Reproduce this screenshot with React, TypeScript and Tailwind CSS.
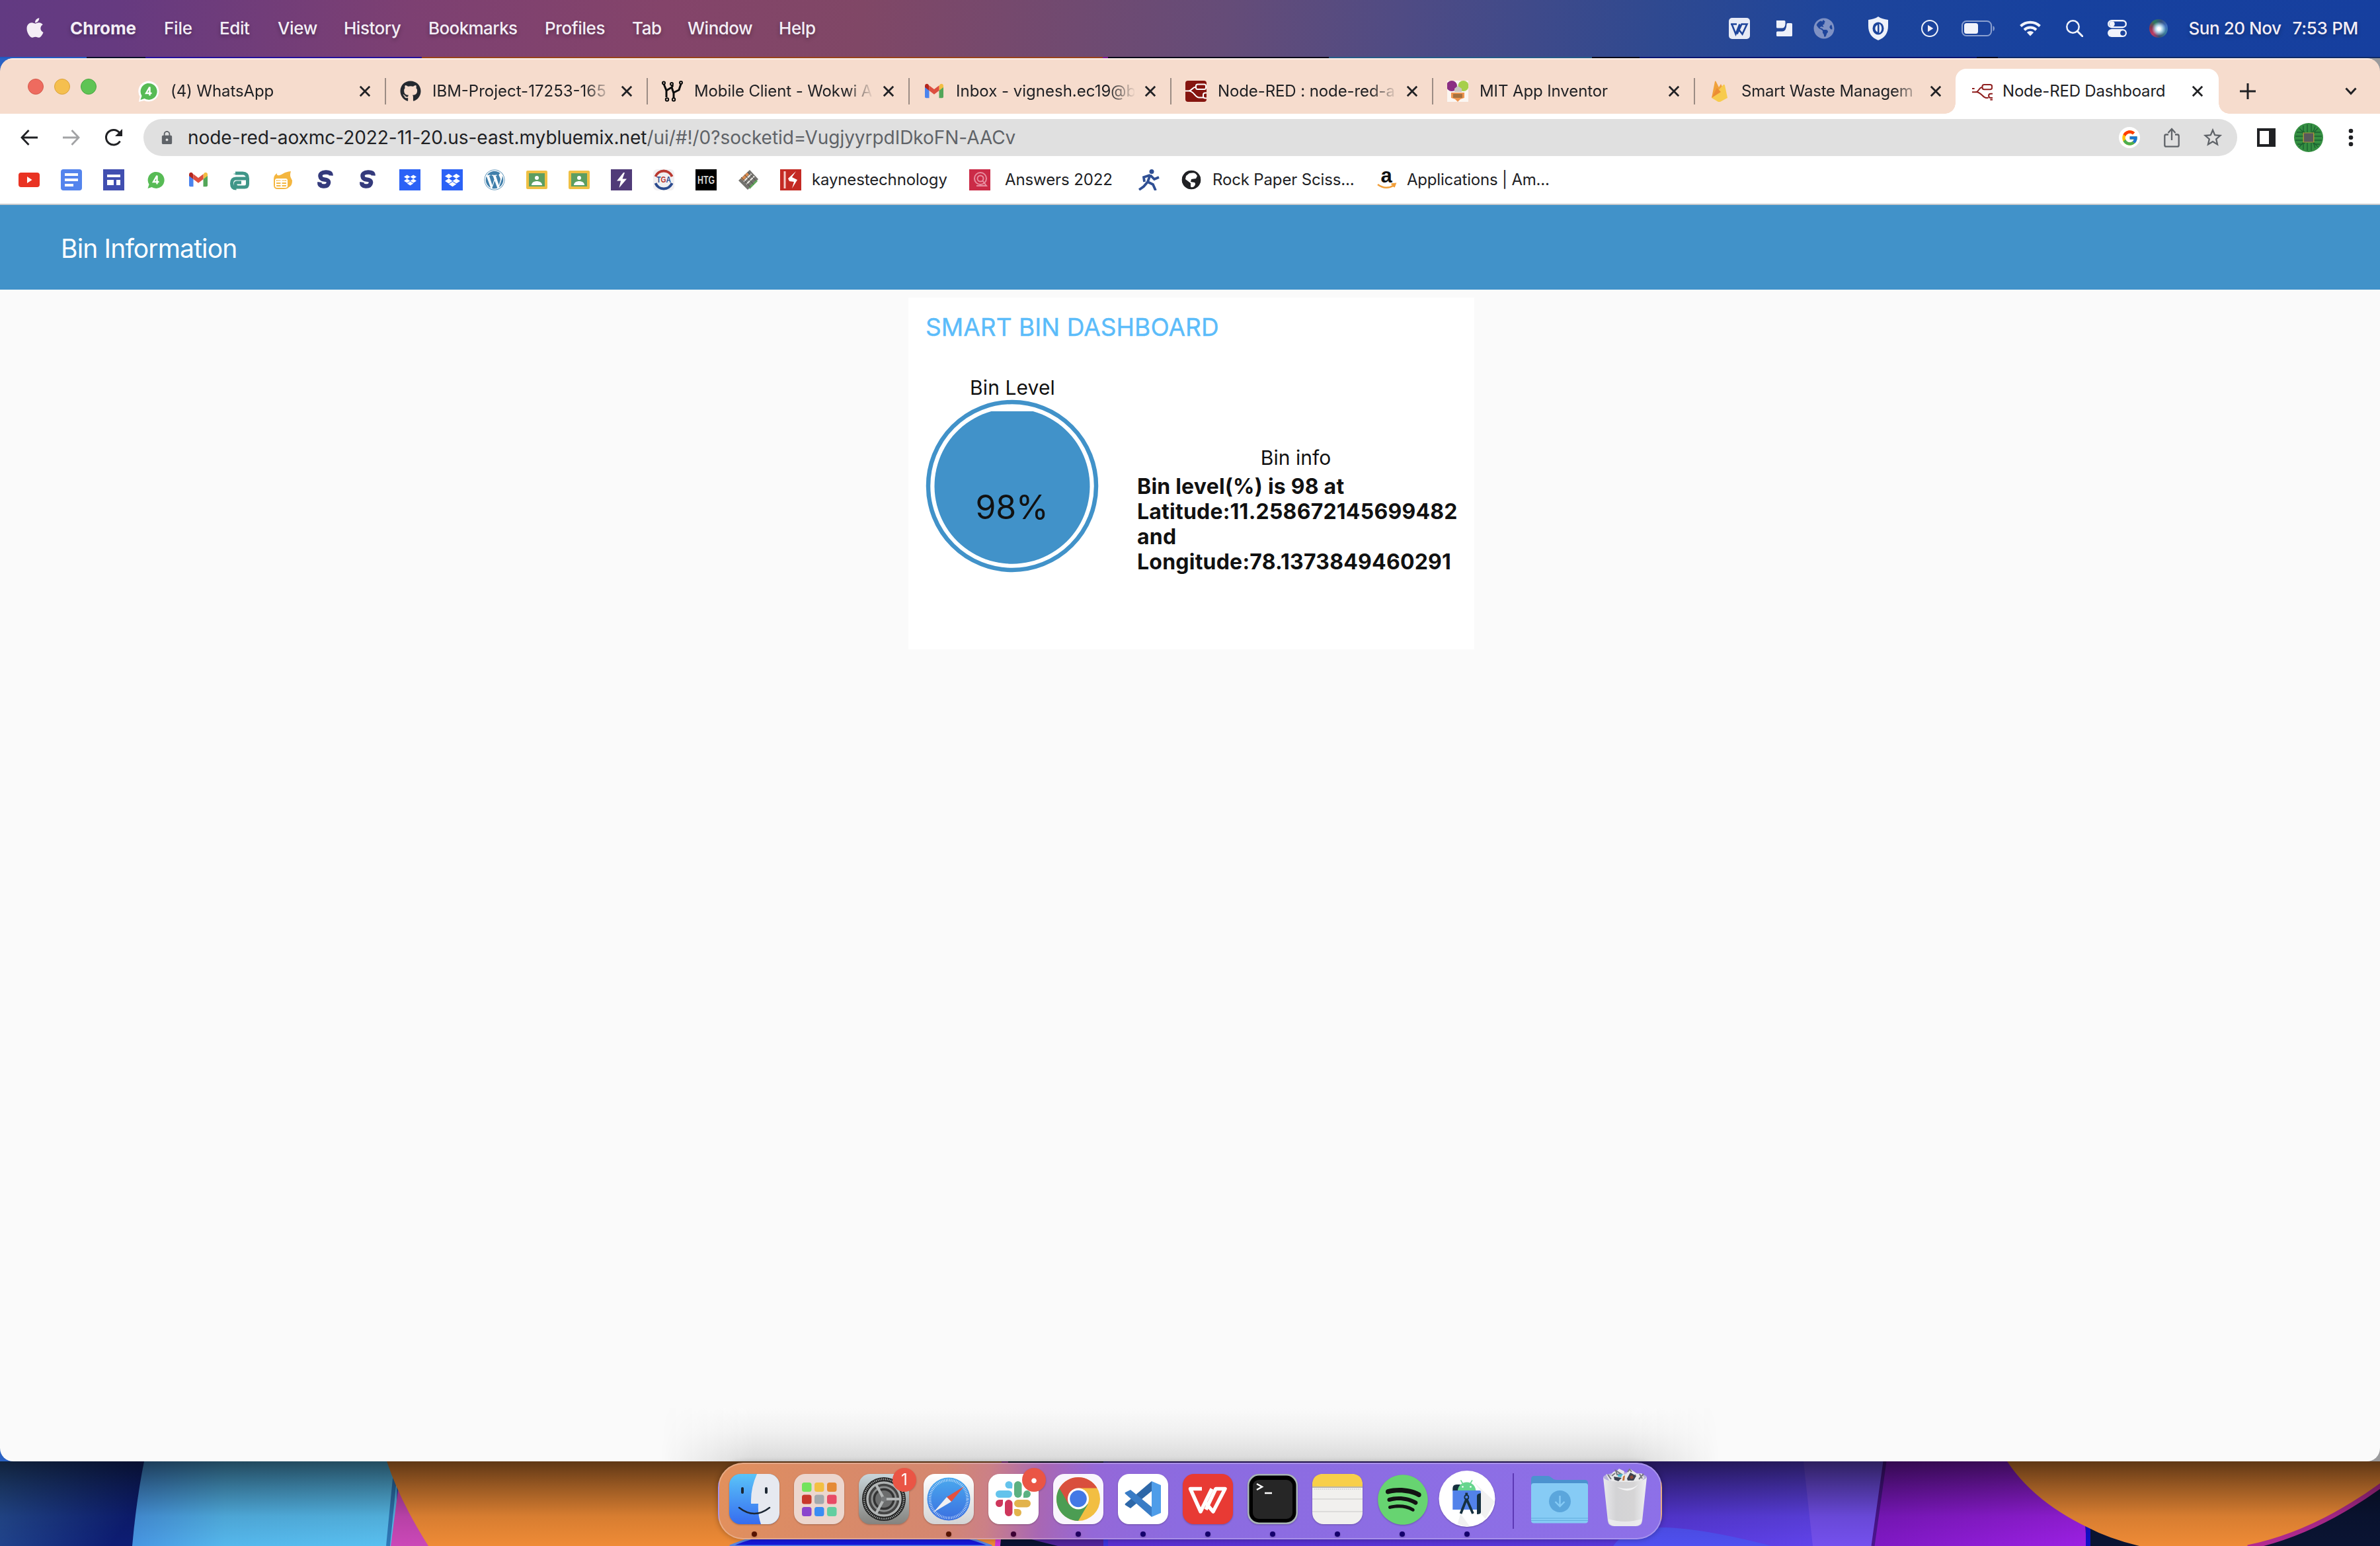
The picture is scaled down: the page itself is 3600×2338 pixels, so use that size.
import React from "react";
import { FaApple, FaGithub, FaWordpress, FaDropbox, FaSpotify, FaGlobeAmericas } from "react-icons/fa";
import { FcGoogle } from "react-icons/fc";
import { MdLock, MdStarBorder, MdPlayArrow } from "react-icons/md";

/* ---------- small drawings ---------- */

const NodeRed = ({ c = "#8f1f1f" }: { c?: string }) => (
  <g fill="none" stroke={c} strokeWidth="2.200">
    <rect x="17" y="5" width="16" height="8" rx="3" />
    <path d="M0 11.500h4M0 17.500h6c5 0 5-8 11-8M6 17c9 0 11 9 17 10h4" />
    <path d="M34 20h-3q-3.500 0-3.500 3.500t3.500 3.500h3M30 30h4" />
  </g>
);

const Whatsapp = ({ className, halo }: { className: string; halo?: boolean }) => (
  <svg viewBox="0 0 32 32" className={className}>
    {halo && <path d="M1 32l1.500-8A15.500 15.500 0 1 1 9 30z" fill="#fff" />}
    <path d="M3.500 29l2-6A12.500 12.500 0 1 1 9.500 27z" fill="#57bb55" />
    <path d="M17.500 9.500v13M17.500 9.500l-5.500 9.500h8.500" stroke="#fff" strokeWidth="2.400" fill="none" />
  </svg>
);

const Gmail = ({ className }: { className: string }) => (
  <svg viewBox="0 0 32 32" className={className}>
    <path d="M2 9v15.500a1.800 1.800 0 0 0 1.800 1.800H8.500V14z" fill="#4b84ee" />
    <path d="M30 9v15.500a1.800 1.800 0 0 1-1.800 1.800H23.500V14z" fill="#53a659" />
    <path d="M23.500 8v7L30 10V8c0-3-3-4-5-2.500z" fill="#f2bd42" />
    <path d="M8.500 8v7L2 10V8c0-3 3-4 5-2.500z" fill="#b3261e" />
    <path d="M8.500 15V7.200L16 13l7.500-5.800V15L16 20.700z" fill="#dd4f40" />
  </svg>
);

const Close = ({ className = "" }: { className?: string }) => (
  <svg viewBox="0 0 18 18" className={"size-[18px] shrink-0 " + className}>
    <path d="M1.800 1.800l14.400 14.400M16.200 1.800L1.800 16.200" stroke="#202124" strokeWidth="2.800" />
  </svg>
);

/* ---------- menu bar ---------- */

function MenuBar() {
  return (
    <header className="flex h-[86px] shrink-0 items-center bg-[linear-gradient(95deg,#623a82_0px,#663a80_180px,#7d4072_620px,#84446a_1000px,#804766_1300px,#654c78_1850px,#4f4b84_2120px,#2f4990_2500px,#1e459b_2760px,#17419e_3100px,#163f9f_3600px)] text-[26px] leading-none font-medium text-[#f4eef6] [text-shadow:0_3px_6px_rgba(0,0,0,.3)]">
      <div className="flex w-[106px] pl-[36px]">
        <FaApple className="-mt-[3px] size-[34px]" />
      </div>
      <span className="w-[142px] font-bold tracking-[-0.1px]">Chrome</span>
      <span className="w-[84px] tracking-[-0.2px]">File</span>
      <span className="w-[88px] tracking-[-0.4px]">Edit</span>
      <span className="w-[100px] tracking-[-0.4px]">View</span>
      <span className="w-[128px] tracking-[-0.5px]">History</span>
      <span className="w-[176px] tracking-[-0.6px]">Bookmarks</span>
      <span className="w-[132px] tracking-[-0.4px]">Profiles</span>
      <span className="w-[84px] tracking-[-0.4px]">Tab</span>
      <span className="w-[138px] tracking-[-0.5px]">Window</span>
      <span className="tracking-[-0.4px]">Help</span>

      <div className="ml-auto flex items-center">
        <svg viewBox="0 0 32 32" className="size-[32px]">
          <rect width="32" height="32" rx="5" fill="#e8ebf6" />
          <path d="M3 9.500h9M4.500 9.500l6 15 6-15M14.500 17l6 7.500 7-15h-8l-7 15" fill="none" stroke="#1f459b" strokeWidth="2.600" />
        </svg>
        <svg viewBox="0 0 24 24" className="ml-[40px] size-[24px]">
          <path d="M0 0h12q1.500 0 1.500 1.500v4q-.5 6-5 6H1.500Q0 11.500 0 10zM17 4h5.500q1.500 0 1.500 1.500v17q0 1.500-1.500 1.500h-21Q0 24 0 22.500V18q0-1.500 1.500-1.500H9q6 0 6.500-11Q15.500 4 17 4z" fill="#eef1fa" />
        </svg>
        <FaGlobeAmericas className="ml-[32px] size-[32px] opacity-45" />
        <svg viewBox="0 0 30 36" className="ml-[51px] h-[36px] w-[30px]">
          <path d="M15 0c4 3 9 4 15 5v9c0 11-5 18-15 22C5 32 0 25 0 14V5c6-1 11-2 15-5z" fill="#eef1fa" />
          <ellipse cx="15" cy="18" rx="8.500" ry="9.500" fill="#1c449b" />
          <path d="M14 12.500a6 6 0 0 0 0 11zM16.500 11c5 2 5 12 0 14z" fill="#eef1fa" />
        </svg>
        <div className="ml-[50px] grid size-[26px] place-items-center rounded-full border-[2.5px] border-[#eef1fa]">
          <MdPlayArrow className="size-[18px]" />
        </div>
        <svg viewBox="0 0 50 24" className="ml-[35px] h-[24px] w-[50px]">
          <rect x="1" y="1" width="44" height="22" rx="6.500" fill="none" stroke="#8ba0cf" strokeWidth="2" />
          <rect x="4" y="4" width="21" height="16" rx="3.500" fill="#f1f3fb" />
          <path d="M47.500 8q2.500 1 2.500 4t-2.500 4z" fill="#8ba0cf" />
        </svg>
        <svg viewBox="0 0 32 24" className="ml-[38px] h-[24px] w-[32px]">
          <path d="M1.500 8.500a21 21 0 0 1 29 0M7 14.200a13 13 0 0 1 18 0" fill="none" stroke="#f1f3fb" strokeWidth="4" />
          <path d="M10.800 18a7.500 7.500 0 0 1 10.400 0L16 23.500z" fill="#f1f3fb" />
        </svg>
        <svg viewBox="0 0 26 26" className="ml-[38px] size-[26px]">
          <circle cx="10.500" cy="10.500" r="9.200" fill="none" stroke="#f1f3fb" strokeWidth="2.500" />
          <path d="M17.300 17.300l7.500 7.500" stroke="#f1f3fb" strokeWidth="3" strokeLinecap="round" />
        </svg>
        <svg viewBox="0 0 29 26" className="ml-[37px] h-[26px] w-[29px]">
          <rect x="1.200" y="1.200" width="26.600" height="10" rx="5" fill="none" stroke="#f1f3fb" strokeWidth="2.400" />
          <circle cx="6.700" cy="6.200" r="4" fill="#f1f3fb" />
          <rect y="14" width="29" height="12" rx="6" fill="#f1f3fb" />
          <circle cx="23" cy="20" r="3.800" fill="#1b439c" />
        </svg>
        <div className="ml-[34px] size-[28px] rounded-full bg-[radial-gradient(circle_at_52%_52%,#fff_0_10%,#b9dcee_24%,transparent_52%),conic-gradient(from_20deg,#35507c,#3f6fc0,#3a7f9d,#39506f,#c03a63,#8b3450,#2d7a5e,#35507c)]" />
        <span className="ml-[32px] w-[157px] tracking-[-0.45px] whitespace-pre">Sun 20 Nov</span>
        <span className="mr-[33px] tracking-[-0.3px]">7:53 PM</span>
      </div>
    </header>
  );
}

/* ---------- tab strip ---------- */

const fav = "size-[32px] shrink-0";

const tabs: { title: string; icon: React.ReactNode; track: string }[] = [
  { title: "(4) WhatsApp", icon: <Whatsapp className={fav} halo />, track: "tracking-[-0.1px]" },
  { title: "IBM-Project-17253-165", icon: <FaGithub className={fav + " text-[#24292f]"} />, track: "tracking-[0px]" },
  {
    title: "Mobile Client - Wokwi A",
    track: "tracking-[-0.1px]",
    icon: (
      <svg viewBox="0 0 32 32" className={fav}>
        <g fill="none" stroke="#0b0b0b" strokeWidth="3">
          <path d="M3 5l4 10v10M7 15l8-5 2-3M15 10l3 9v8M18 18l8-4 3-9" />
          <g strokeWidth="2" fill="#f6dccd">
            <circle cx="3" cy="3.500" r="2" /><circle cx="15" cy="5" r="2" /><circle cx="29" cy="3" r="2" />
            <circle cx="8" cy="28.500" r="2.200" /><circle cx="18" cy="28.500" r="2.200" />
          </g>
        </g>
      </svg>
    ),
  },
  { title: "Inbox - vignesh.ec19@b", icon: <Gmail className={fav} />, track: "tracking-[0px]" },
  {
    title: "Node-RED : node-red-a",
    track: "tracking-[-0.1px]",
    icon: (
      <svg viewBox="0 0 32 32" className={fav}>
        <rect width="32" height="32" rx="4" fill="#85150f" />
        <g fill="none" stroke="#fff" strokeWidth="2">
          <rect x="16" y="5.500" width="15" height="7.500" rx="2.500" />
          <path d="M0 15.500h5c5 0 5-6 11-6M5 15.500c8 0 9 9 15 10" />
          <path d="M33 18.500h-3q-3 0-3 3v2q0 3 3 3h3M20 25.500h7" />
        </g>
      </svg>
    ),
  },
  {
    title: "MIT App Inventor",
    track: "tracking-[-0.1px]",
    icon: (
      <svg viewBox="0 0 32 32" className={fav}>
        <rect width="32" height="32" fill="#fbf6f2" />
        <circle cx="7" cy="8" r="8" fill="#8a2f83" /><circle cx="24.500" cy="8" r="8" fill="#a6cf4b" />
        <path d="M11 12l5-4 6 4v5H11z" fill="#c9c6c4" />
        <path d="M6 18h20v8l-6 2-4 4-4-4-6-2z" fill="#ee9550" />
        <path d="M9 20h14v6H9z" fill="#a5713f" />
      </svg>
    ),
  },
  {
    title: "Smart Waste Managem",
    track: "tracking-[-0.2px]",
    icon: (
      <svg viewBox="0 0 32 32" className={fav}>
        <path d="M4 26L9 1q.500-1 1.500 0l4.500 9 3-5 2 4z" fill="#f0a13a" />
        <path d="M4 26L22 6q1-1 2 1l4 19-11 6q-1.500.600-3 0z" fill="#f7cb4d" />
        <path d="M4 26L12 11l6 6z" fill="#ec8d34" />
      </svg>
    ),
  },
];

function TabStrip() {
  return (
    <div className="flex h-[84px] shrink-0 items-end bg-[#f6dccd] text-[24px] leading-[30px] text-[#202124] shadow-[inset_0_2px_0_#fbeee6]">
      <div className="flex h-[68px] w-[188px] shrink-0 gap-[16px] pt-[15px] pl-[42px]">
        <i className="size-[24px] rounded-full border border-[#d45a4c] bg-[#ee6b5f]" />
        <i className="size-[24px] rounded-full border border-[#dba23b] bg-[#f5bf4f]" />
        <i className="size-[24px] rounded-full border border-[#4ba544] bg-[#5fc454]" />
      </div>
      {tabs.map((t, i) => (
        <div key={t.title} className="flex h-[68px] w-[396px] shrink-0 items-center pl-[21px]">
          {t.icon}
          <span className={"ml-[17px] w-[270px] shrink-0 whitespace-nowrap [mask-image:linear-gradient(to_right,#000_230px,transparent_272px)] " + t.track}>{t.title}</span>
          <Close className="ml-[15px]" />
          <i className={"ml-[21px] h-[40px] w-[2px] " + (i < 6 ? "bg-[#9b8c84]" : "")} />
        </div>
      ))}
      <div className="relative -ml-[2px] flex h-[68px] w-[398px] shrink-0 items-center rounded-t-[16px] bg-white pl-[25px] before:absolute before:bottom-0 before:-left-[16px] before:size-[16px] before:bg-[radial-gradient(circle_at_0_0,transparent_15.5px,#fff_16px)] after:absolute after:-right-[16px] after:bottom-0 after:size-[16px] after:bg-[radial-gradient(circle_at_100%_0,transparent_15.5px,#fff_16px)]">
        <svg viewBox="0 0 34 32" className="h-[30px] w-[31px] shrink-0"><NodeRed /></svg>
        <span className="ml-[15px] w-[271px] tracking-[-0.2px] whitespace-nowrap">Node-RED Dashboard</span>
        <Close className="ml-[15px]" />
      </div>
      <svg viewBox="0 0 26 26" className="mb-[21px] ml-[31px] size-[26px]">
        <path d="M13 1v24M1 13h24" stroke="#202124" strokeWidth="3" />
      </svg>
      <svg viewBox="0 0 18 12" className="mr-[35px] mb-[28px] ml-auto h-[12px] w-[18px]">
        <path d="M1.500 1.500L9 9.500l7.500-8" fill="none" stroke="#202124" strokeWidth="3" />
      </svg>
    </div>
  );
}

/* ---------- address bar ---------- */

function AddressRow() {
  return (
    <div className="flex h-[72px] shrink-0 items-center bg-white">
      <svg viewBox="0 0 26 24" className="ml-[31px] h-[24px] w-[26px]">
        <path d="M12.500 1L2 12l10.500 11M2 12h24" fill="none" stroke="#202124" strokeWidth="2.800" />
      </svg>
      <svg viewBox="0 0 26 24" className="ml-[38px] h-[24px] w-[26px]">
        <path d="M13.500 1L24 12 13.500 23M24 12H0" fill="none" stroke="#a2a3a5" strokeWidth="2.800" />
      </svg>
      <svg viewBox="0 0 28 28" className="ml-[37px] size-[28px]">
        <path d="M23.500 19.500A11.300 11.300 0 1 1 22.500 6.500" fill="none" stroke="#202124" strokeWidth="3" />
        <path d="M27 1v11H16z" fill="#202124" />
      </svg>
      <div className="ml-[31px] flex h-[56px] w-[3167px] items-center rounded-full bg-[#e0e0e0] pl-[24px]">
        <MdLock className="size-[23px] text-[#5f6368]" />
        <span className="ml-[20px] text-[28px] leading-none tracking-[-0.04px] whitespace-nowrap text-[#5f6368]">
          <span className="text-[#202124]">node-red-aoxmc-2022-11-20.us-east.mybluemix.net</span>/ui/#!/0?socketid=VugjyyrpdIDkoFN-AACv
        </span>
        <div className="ml-auto grid size-[32px] place-items-center rounded-full bg-white">
          <FcGoogle className="size-[27px]" />
        </div>
        <svg viewBox="0 0 24 30" className="ml-[36px] h-[30px] w-[24px]">
          <path d="M7 10.500H3.500q-2.200 0-2.200 2.200v13.800q0 2.200 2.200 2.200h17q2.200 0 2.200-2.200V12.700q0-2.200-2.200-2.200H17M12 19V2.500M6.500 8L12 2l5.500 6" fill="none" stroke="#5f6368" strokeWidth="2.300" />
        </svg>
        <MdStarBorder className="mr-[20px] ml-[33px] size-[34px] text-[#5f6368]" />
      </div>
      <i className="ml-[30px] h-[28px] w-[28px] border-[4px] border-r-[10px] border-[#202124]" />
      <svg viewBox="0 0 44 44" className="ml-[28px] size-[44px]">
        <circle cx="22" cy="22" r="22" fill="#358f42" />
        <g stroke="#1b6130" strokeWidth="1.300" fill="none">
          <path d="M14 4v8l3 4M20 2v12M26 2v12M32 5l-2 6-3 4M4 14h8l3 3M2 20h12M2 26h12M5 32h7l3-4M14 40v-8l3-3M20 42V30M26 42V30M32 38l-2-6-2-3M40 14h-8l-3 3M42 20H30M42 26H30M39 32h-7l-3-3" />
          <path d="M8 8l6 6M36 8l-6 6M8 36l6-6M36 36l-6-6" />
        </g>
        <rect x="13.500" y="14.500" width="17" height="15" fill="#a8963a" />
        <rect x="15" y="15.500" width="14" height="13" fill="#57595b" />
      </svg>
      <svg viewBox="0 0 8 28" className="ml-[38px] h-[28px] w-[8px]">
        <g fill="#202124"><circle cx="4" cy="4" r="3.300" /><circle cx="4" cy="14" r="3.300" /><circle cx="4" cy="24" r="3.300" /></g>
      </svg>
    </div>
  );
}

/* ---------- bookmarks ---------- */

const bk = "size-[32px] shrink-0";

const Dropbox = ({ size }: { size: string }) => (
  <div className={bk + " grid place-items-center bg-[#2b62f6] text-white"}><FaDropbox className={size} /></div>
);
const Classroom = () => (
  <svg viewBox="0 0 32 32" className={bk}>
    <rect y="2" width="32" height="28" rx="2" fill="#efc044" />
    <rect x="4" y="6" width="24" height="20" fill="#5c9e61" />
    <circle cx="16" cy="13" r="3" fill="#fff" />
    <path d="M8 24c0-4 4-6 8-6s8 2 8 6z" fill="#fff" />
  </svg>
);
const BlueS = () => (
  <svg viewBox="0 0 32 32" className={bk}>
    <path d="M24.500 9.500Q25 4 16.500 4.500 8 5 8.500 10.500 9 15 14.500 15.500 21.500 16 21 20.500 20 26 13 25.500 6.500 25 7.500 19.500" fill="none" stroke="#343a7c" strokeWidth="6.500" />
  </svg>
);

function Bookmarks() {
  return (
    <div className="flex h-[64px] shrink-0 items-start bg-white pt-[12px] pl-[28px] text-[24px] leading-[32px] text-[#202124]">
      <div className="flex gap-[32px]">
        <svg viewBox="0 0 32 32" className={bk}><rect y="5" width="32" height="22" rx="4" fill="#e93323" /><path d="M13 11v10l7.500-5z" fill="#fff" /></svg>
        <svg viewBox="0 0 32 32" className={bk}><rect width="32" height="32" rx="4" fill="#5484ed" /><path d="M6 8h20M6 16h20M6 24h13" stroke="#fff" strokeWidth="4" /></svg>
        <svg viewBox="0 0 32 32" className={bk}><rect width="32" height="32" fill="#414fb0" /><path d="M6 8h20v4H6zM6 16h10v8H6zM20 16h6v8h-6z" fill="#fff" /></svg>
        <Whatsapp className={bk} />
        <Gmail className={bk} />
        <svg viewBox="0 0 32 32" className={bk}><path d="M8 6h11q7.500 0 7.500 8v4.500M8 6.500v1M17 20H10q-2 0-2 3.500t4 3.500h10q4.500 0 4.500-5v-7q0-1-1-1H9q-6.500 0-6.500 7.500t7 7.500" fill="none" stroke="#3f9688" strokeWidth="5" /></svg>
        <svg viewBox="0 0 32 32" className={bk}>
          <path d="M2 15q0-6 5-9-1 4 4 3 3-1 8-4 6-2 9-2-2 6 0 10l2 4q0 8-5 10-2 3-8 3H8q-6 0-6-6z" fill="#f4b63f" />
          <path d="M5 17q0-2 2-2h13q2 0 2 2v8q0 2-2 2H7q-2 0-2-2zM5 19h17M5 23h17M13.500 15v12" fill="none" stroke="#fff" strokeWidth="2" />
          <path d="M7 15h13v3H7z" fill="#fff" opacity=".5" />
        </svg>
        <BlueS />
        <BlueS />
        <Dropbox size="size-[19px]" />
        <Dropbox size="size-[23px]" />
        <FaWordpress className={bk + " text-[#3f7fab]"} />
        <Classroom />
        <Classroom />
        <svg viewBox="0 0 32 32" className={bk}><rect width="32" height="32" fill="#503b78" /><path d="M19 5L9 17.500h6L12.500 28 24 14.500h-6.500L21 5z" fill="#fff" /></svg>
        <svg viewBox="0 0 32 32" className={bk}>
          <rect width="32" height="32" rx="6" fill="#f1eff1" />
          <path d="M3.500 11a13.500 13.500 0 0 1 25 0" fill="none" stroke="#b9372f" strokeWidth="4" />
          <path d="M3.500 21a13.500 13.500 0 0 0 25 0" fill="none" stroke="#2b4a8e" strokeWidth="4" />
          <text x="19.500" y="20.500" textAnchor="middle" transform="scale(.82 1)" fontSize="12.500" fontWeight="700" fontFamily="Liberation Sans, sans-serif" fill="#2b4a8e">T<tspan fill="#b9372f">G</tspan>A</text>
        </svg>
        <svg viewBox="0 0 32 32" className={bk}><rect width="32" height="32" fill="#000" /><text x="22" y="22.500" textAnchor="middle" transform="scale(.73 1)" fontSize="17" fontWeight="700" fontFamily="Liberation Sans, sans-serif" fill="#d6d6d6">HTG</text></svg>
        <svg viewBox="0 0 32 32" className={bk}>
          <path d="M1 17L18 1l13 14-16 16z" fill="#73726e" />
          <path d="M5 14L14 5l3 3-9 9z" fill="#d98a4e" /><path d="M17 27l11-11 2 2-12 12z" fill="#5fa65a" />
          <path d="M9 18.500L20.500 7M13 22.500L25 10.500" stroke="#f0eeea" strokeWidth="2" />
          <path d="M5 12l14 15M10 8l14 15M15 4l12 13" stroke="#4b4a48" strokeWidth="1" />
        </svg>
        <svg viewBox="0 0 32 32" className={bk}><rect width="32" height="32" fill="#c42a24" /><path d="M7 3v26" stroke="#f4c9c6" strokeWidth="3" /><path d="M24 3L12 14l2 4 7 1-3 10 8-13-8-4z" fill="#fff" /></svg>
      </div>
      <span className="ml-[16px] w-[238px] tracking-[-0.15px]">kaynestechnology</span>
      <svg viewBox="0 0 32 32" className={bk}><rect width="32" height="32" fill="#cb2b47" /><g fill="none" stroke="#e88ea0" strokeWidth="2"><circle cx="17" cy="14" r="9" /><circle cx="17" cy="14" r="4.500" /><path d="M20 17l6 8H11" /></g></svg>
      <span className="ml-[22px] w-[202px] tracking-[-0.1px]">Answers 2022</span>
      <svg viewBox="0 0 32 32" className={bk}>
        <circle cx="20" cy="3.500" r="3.500" fill="#2f4f94" />
        <path d="M18 8l-4 11M18 9l6 6 7-3M17 9l-9 3 1 7M14 19l8 4 4 9M14 19l-6 7-7 5" fill="none" stroke="#2f4f94" strokeWidth="3.800" />
      </svg>
      <svg viewBox="0 0 30 30" className="mt-px ml-[33px] size-[30px]">
        <circle cx="15" cy="15" r="14" fill="#202124" />
        <path d="M12 5l9-1 3 5-2 4-7 1-1 4 6 1q2 2 0 5l-4 4-2-3v-5l-8-6 1-5z" fill="#fff" />
        <circle cx="15" cy="15" r="12.800" fill="none" stroke="#202124" strokeWidth="3" />
      </svg>
      <span className="ml-[17px] w-[247px] tracking-[-0.15px]">Rock Paper Sciss...</span>
      <svg viewBox="0 0 32 32" className={bk}>
        <text x="16" y="20" textAnchor="middle" fontSize="31" fontWeight="700" fontFamily="Liberation Sans, sans-serif" fill="#111">a</text>
        <path d="M3 23q12 9 25 1M23.500 22.500l6-.500-2 5" fill="none" stroke="#f19e38" strokeWidth="2.500" />
      </svg>
      <span className="ml-[15px] tracking-[-0.2px]">Applications | Am...</span>
    </div>
  );
}

/* ---------- dashboard page ---------- */

function Dashboard() {
  return (
    <main className="relative flex min-h-0 flex-1 flex-col bg-[#fafafa]">
      <div className="flex h-[128px] shrink-0 items-center bg-[#4192c9] pt-[3px] pl-[92px]">
        <h1 className="text-[39px] leading-none tracking-[-0.85px] text-white">Bin Information</h1>
      </div>
      <section className="mt-[12px] ml-[1374px] flex h-[532px] w-[856px] flex-col bg-white pl-[27px] text-[#111]">
        <h2 className="mt-[25px] -ml-px text-[37px] leading-[40px] tracking-[0.05px] text-[#5bbcfa] [-webkit-text-stroke:0.4px_#5bbcfa]">SMART BIN DASHBOARD</h2>
        <div className="mt-[51px] flex">
          <div className="flex w-[261px] flex-col items-center">
            <p className="text-[30px] leading-[40px] tracking-[0.1px]">Bin Level</p>
            <div className="relative mt-[-2px] -ml-[2px] grid size-[262px] place-items-center">
              <svg viewBox="0 0 262 262" className="col-start-1 row-start-1 size-full">
                <circle cx="131" cy="131" r="127" fill="none" stroke="#4192c9" strokeWidth="6.500" />
                <path d="M99.500 18h63A117.500 117.500 0 1 1 99.500 18z" fill="#4192c9" />
              </svg>
              <span className="col-start-1 row-start-1 mt-[64px] text-[50px] leading-none tracking-[-0.3px]">98%</span>
            </div>
          </div>
          <div className="ml-[58px] flex w-[486px] flex-col">
            <p className="mt-[106px] pr-[6px] text-center text-[30px] leading-[40px]">Bin info</p>
            <p className="mt-[5px] text-[32px] leading-[38px] font-bold tracking-[0.22px] whitespace-nowrap">
              Bin level(%) is 98 at<br />Latitude:11.258672145699482<br />and<br />Longitude:78.1373849460291
            </p>
          </div>
        </div>
      </section>
      <div className="absolute bottom-0 left-[1000px] h-[80px] w-[1600px] bg-[linear-gradient(to_bottom,#fafafa,#f0f0f0_45%,#d9d9d9)] [mask-image:linear-gradient(to_right,transparent,#000_140px,#000_1460px,transparent)]" />
    </main>
  );
}

/* ---------- wallpaper and dock ---------- */

function Wallpaper() {
  return (
    <svg viewBox="0 2210 3600 128" preserveAspectRatio="none" className="absolute inset-0 h-[128px] w-[3600px]">
      <defs>
        <linearGradient id="navy" x1="0" x2="1" y1="0" y2=".4"><stop offset="0" stopColor="#2a5697" /><stop offset="1" stopColor="#0d1d74" /></linearGradient>
        <linearGradient id="sky"><stop offset="0" stopColor="#4795e2" /><stop offset=".35" stopColor="#55b7ec" /><stop offset="1" stopColor="#59c0f0" /></linearGradient>
        <linearGradient id="vio"><stop offset="0" stopColor="#5a2fd0" /><stop offset=".7" stopColor="#5738da" /><stop offset="1" stopColor="#6448f2" /></linearGradient>
        <linearGradient id="mag"><stop offset="0" stopColor="#7f18c4" /><stop offset="1" stopColor="#9c20e4" /></linearGradient>
        <linearGradient id="shade" x1="0" x2="0" y1="0" y2="1"><stop offset="0" stopColor="#000" stopOpacity=".6" /><stop offset=".3" stopColor="#000" stopOpacity=".36" /><stop offset=".65" stopColor="#000" stopOpacity=".1" /><stop offset="1" stopColor="#000" stopOpacity="0" /></linearGradient>
      </defs>
      <rect x="0" y="2210" width="220" height="128" fill="url(#navy)" />
      <path d="M218 2210H600V2338H200Q206 2270 218 2210z" fill="url(#sky)" />
      <path d="M597 2236L587 2338" stroke="#2f78b8" strokeWidth="6" />
      <path d="M602 2254L660 2338H591z" fill="#cb48b8" />
      <path d="M585 2210Q605 2270 648 2338H1513L1525 2210z" fill="#ef8b36" />
      <path d="M1104 2338Q1180 2306 1300 2306T1500 2338z" fill="#1717dc" stroke="#5b86e0" strokeWidth="3" />
      <path d="M1525 2210l-12 128h-8l10-128z" fill="#cf35d4" />
      <path d="M1513 2338l12-128h150v128z" fill="#0a1233" />
      <path d="M1560 2328h115v10h-75z" fill="#51239a" />
      <rect x="1669" y="2210" width="8" height="128" fill="#3a35dc" />
      <path d="M1676 2210H2851L2833 2338H1676z" fill="url(#vio)" />
      <path d="M2728 2210H2851L2833 2338H2742z" fill="#7450ee" />
      <path d="M2440 2338Q2460 2308 2520 2310T2680 2338z" fill="#4f50f0" />
      <path d="M2851 2210H3160V2338H2833z" fill="url(#mag)" />
      <path d="M2851 2210L2833 2338" stroke="#4c1590" strokeWidth="5" />
      <path d="M3154 2300h446v38H3156z" fill="#0a1433" />
      <rect x="3155" y="2306" width="7" height="32" fill="#1010c8" />
      <path d="M3400 2338Q3520 2312 3600 2236V2338z" fill="#0a1433" />
      <path d="M3036 2210Q3076 2270 3156 2309Q3190 2327 3236 2338H3404Q3500 2320 3600 2244V2210z" fill="#ef8b36" />
      <path d="M3400 2340Q3500 2320 3602 2246" fill="none" stroke="#b32a92" strokeWidth="7" />
      <rect x="0" y="2210" width="3600" height="128" fill="url(#shade)" />
    </svg>
  );
}

const app = "size-[76px] overflow-visible";

const gridColors = ["#74e35c", "#f3c043", "#e58a35", "#c8372b", "#a3a9ad", "#e84a66", "#8b45cd", "#3b8df3", "#62cea0"];

const dockItems: { name: string; dot: string; badge?: string; icon: React.ReactNode }[] = [
  {
    name: "finder", dot: "bg-[#571400]",
    icon: (
      <svg viewBox="0 0 76 76" className={app}>
        <defs>
          <linearGradient id="fnd" x1="0" x2="0" y1="0" y2="1"><stop offset="0" stopColor="#5ac4f8" /><stop offset="1" stopColor="#366cf0" /></linearGradient>
          <clipPath id="fndc"><rect width="76" height="76" rx="17" /></clipPath>
        </defs>
        <g clipPath="url(#fndc)">
          <rect width="76" height="76" fill="url(#fnd)" />
          <path d="M42 0Q32 22 33 45H44Q43 62 48 76H76V0z" fill="#e6e9f0" />
        </g>
        <path d="M20 22v6M56 22v6" stroke="#1c2733" strokeWidth="4" strokeLinecap="round" />
        <path d="M15 51q23 18 46 0" fill="none" stroke="#1c2733" strokeWidth="2.500" strokeLinecap="round" />
      </svg>
    ),
  },
  {
    name: "launchpad", dot: "",
    icon: (
      <svg viewBox="0 0 76 76" className={app}>
        <rect width="76" height="76" rx="17" fill="#ecd6ce" />
        {gridColors.map((c, i) => <rect key={c} x={12 + (i % 3) * 19} y={13 + Math.floor(i / 3) * 18.5} width="14.500" height="14" rx="3.500" fill={c} />)}
      </svg>
    ),
  },
  {
    name: "settings", dot: "", badge: "1",
    icon: (
      <svg viewBox="0 0 76 76" className={app}>
        <defs><linearGradient id="set" x1="0" x2="0" y1="0" y2="1"><stop offset="0" stopColor="#c9d5da" /><stop offset="1" stopColor="#84837f" /></linearGradient></defs>
        <rect width="76" height="76" rx="17" fill="url(#set)" />
        <circle cx="38" cy="38" r="33" fill="#1c1c1c" />
        <circle cx="38" cy="38" r="30" fill="none" stroke="#9da0a0" strokeWidth="3" strokeDasharray="1.4 1.4" />
        <circle cx="38" cy="38" r="25" fill="#444" stroke="#b0b3b3" strokeWidth="3.500" />
        <circle cx="38" cy="38" r="18" fill="#333" stroke="#8e9090" strokeWidth="3" />
        <circle cx="38" cy="38" r="13" fill="#6c6d6d" />
        <path d="M38 38h24M38 38L26 16M38 38L26 60" stroke="#b4b7b7" strokeWidth="4" />
        <circle cx="38" cy="38" r="4" fill="#77797a" />
      </svg>
    ),
  },
  {
    name: "safari", dot: "bg-[#571400]",
    icon: (
      <svg viewBox="0 0 76 76" className={app}>
        <defs>
          <linearGradient id="saf" x1="0" x2="0" y1="0" y2="1"><stop offset="0" stopColor="#fff" /><stop offset="1" stopColor="#d4d4d4" /></linearGradient>
          <linearGradient id="saf2" x1="0" x2="0" y1="0" y2="1"><stop offset="0" stopColor="#4aa9ee" /><stop offset="1" stopColor="#3a6fe0" /></linearGradient>
        </defs>
        <rect width="76" height="76" rx="17" fill="url(#saf)" />
        <circle cx="38" cy="38" r="32.500" fill="url(#saf2)" />
        <circle cx="38" cy="38" r="28.500" fill="none" stroke="#d8e8fb" strokeWidth="4" strokeDasharray=".8 1.700" />
        <path d="M61 19L42 42l-7-7z" fill="#e4503f" /><path d="M15 58l20-23 7 7z" fill="#f0f0f2" />
      </svg>
    ),
  },
  {
    name: "slack", dot: "bg-[#3c0034]", badge: "•",
    icon: (
      <svg viewBox="0 0 76 76" className={app}>
        <rect width="76" height="76" rx="17" fill="#fff" />
        <g fill="#64c3ec"><rect x="11" y="25" width="25" height="11" rx="5.500" /><path d="M36 22h-5a5.500 5.500 0 1 1 5.500-5.500z" /></g>
        <g fill="#5bb182"><rect x="39" y="11" width="11.500" height="25" rx="5.700" /><path d="M53 36v-5a5.500 5.500 0 1 1 5.500 5z" /></g>
        <g fill="#ce375c"><rect x="25" y="39" width="11.500" height="25" rx="5.700" /><path d="M22 39v5.500A5.500 5.500 0 1 1 16.500 39z" /></g>
        <g fill="#e2b34c"><rect x="39" y="39" width="25" height="11.500" rx="5.700" /><path d="M39 53h5.500a5.500 5.500 0 1 1-5.500 5.500z" /></g>
      </svg>
    ),
  },
  {
    name: "chrome", dot: "bg-[#1f0060]",
    icon: (
      <svg viewBox="0 0 76 76" className={app}>
        <rect width="76" height="76" rx="17" fill="#f9f5fd" />
        <circle cx="38" cy="38" r="33" fill="#f2be42" />
        <path d="M38 38L9.400 21.500A33 33 0 0 0 38 71L52.500 46z" fill="#4c9d53" />
        <path d="M9.400 21.500A33 33 0 0 1 66.600 21.500H38L23.500 46z" fill="#d94f3d" />
        <circle cx="38" cy="37.500" r="16" fill="#fff" /><circle cx="38" cy="37.500" r="12.800" fill="#4378e6" />
      </svg>
    ),
  },
  {
    name: "vscode", dot: "bg-[#14006c]",
    icon: (
      <svg viewBox="0 0 76 76" className={app}>
        <rect width="76" height="76" rx="17" fill="#fff" />
        <path d="M51 11v15L19 52l-8-5q-1-1 0-2z" fill="#2d67a8" />
        <path d="M51 65V50L19 24l-8 4q-1 1 0 2z" fill="#397cc6" />
        <path d="M51 11l14 6v42l-14 6z" fill="#4e9de9" />
      </svg>
    ),
  },
  {
    name: "wps", dot: "bg-[#14006c]",
    icon: (
      <svg viewBox="0 0 76 76" className={app}>
        <rect width="76" height="76" rx="17" fill="#e83a34" />
        <g fill="none" stroke="#fff" strokeWidth="5.500" strokeLinejoin="round">
          <path d="M29 22.500H11.500L27 57 44 22.500" />
          <path d="M33 42l13 15 18-34.500H50L35 54" />
        </g>
      </svg>
    ),
  },
  {
    name: "terminal", dot: "bg-[#14006c]",
    icon: (
      <svg viewBox="0 0 76 76" className={app}>
        <rect width="76" height="76" rx="17" fill="#a9b5b6" />
        <rect x="2.500" y="2.500" width="71" height="71" rx="15" fill="#000" />
        <rect x="8" y="9" width="60" height="59" rx="9" fill="#262626" />
        <path d="M14 15l8 4.500-8 4.500M26 29h11" fill="none" stroke="#fff" strokeWidth="2.500" />
      </svg>
    ),
  },
  {
    name: "notes", dot: "bg-[#14006c]",
    icon: (
      <svg viewBox="0 0 76 76" className={app}>
        <rect width="76" height="76" rx="17" fill="#f1f0ee" />
        <path d="M0 19v-2Q0 0 17 0H59Q76 0 76 17v2z" fill="#f8cf49" />
        <path d="M0 20h76" stroke="#a9a290" strokeWidth="1.500" />
        <path d="M3 23h70" stroke="#cfcfcf" strokeWidth="1.500" strokeDasharray="1.5 1.5" />
        <path d="M0 38h76M0 57h76" stroke="#d5d4d4" strokeWidth="1.600" />
      </svg>
    ),
  },
  {
    name: "spotify", dot: "bg-[#14006c]",
    icon: (
      <div className="grid size-[76px] place-items-center">
        <div className="col-start-1 row-start-1 size-[62px] rounded-full bg-[#121212]" />
        <FaSpotify className="col-start-1 row-start-1 size-[78px] text-[#67d471]" />
      </div>
    ),
  },
  {
    name: "android-studio", dot: "bg-[#14006c]",
    icon: (
      <svg viewBox="0 0 76 76" className={app}>
        <circle cx="38" cy="37.500" r="42.500" fill="#fff" />
        <path d="M48 12L80 42 66 68 59 60V26zM28 60l14 19q-10 1-18-4z" fill="#f1f1f1" />
        <path d="M16.300 26v-4q0-6 6-6h6v10z" fill="#16303f" />
        <path d="M24 25.500a13.600 13 0 0 1 27.300 0z" fill="#67d68e" />
        <path d="M28.500 9.500l3 5M46 9.500l-3 5" stroke="#67d68e" strokeWidth="1.500" />
        <circle cx="31.500" cy="19.500" r="1.300" fill="#fff" /><circle cx="43.500" cy="19.500" r="1.300" fill="#fff" />
        <path d="M16.300 25h40.700q2 0 2 3v3l-6 2v21h-36.700z" fill="#5282ea" />
        <path d="M53 33q0-3 6-4v29q0 3-6 3z" fill="#16303f" />
        <circle cx="37.300" cy="35.200" r="3" fill="none" stroke="#16303f" strokeWidth="1.800" />
        <path d="M37.300 28.500v4M37 38.500L28.500 60M37.600 38.500L47 60" fill="none" stroke="#16303f" strokeWidth="3.800" />
      </svg>
    ),
  },
];

function Dock() {
  return (
    <div className="relative mt-[2px] flex h-[116px] w-[1428px] rounded-[38px] border-2 border-white/25 bg-[linear-gradient(95deg,#e2905c_0,#dc8c64_100px,#d48770_340px,#cb8087_410px,#a867b4_490px,#9468d8_570px,#8c6be0_700px,#8d70e8_1428px)] pl-[15px] shadow-[0_0_8px_rgba(0,0,0,.3)]">
      {dockItems.map((d) => (
        <div key={d.name} className="relative mr-[22px] flex w-[76px] shrink-0 flex-col items-center pt-[15px] drop-shadow-[0_1px_1px_rgba(0,0,0,.25)]">
          {d.icon}
          {d.dot && <i className={"mt-[11px] size-[8px] rounded-full " + d.dot} />}
          {d.badge && (
            <b className="absolute top-[6px] -right-[11px] grid size-[36px] place-items-center rounded-full bg-[#ea5545] text-[24px] leading-none font-normal text-white">{d.badge}</b>
          )}
        </div>
      ))}
      <i className="mt-[14px] ml-[9px] h-[84px] w-[2px] shrink-0 bg-[#5c38b4]" />
      <svg viewBox="0 0 88 76" className="mt-[15px] ml-[25px] h-[76px] w-[88px] shrink-0">
        <path d="M1 8q0-5 5-5h20q3 0 5 2l4 3q2 1 5 1h42q5 0 5 5v14H1z" fill="#4b92cf" />
        <rect x="1" y="14" width="86" height="60.500" rx="4" fill="#86cbf5" />
        <path d="M1 67h86M1 70.500h86" stroke="#62aedd" strokeWidth="1" />
        <circle cx="44.500" cy="41.500" r="16.500" fill="#5ba6dc" />
        <path d="M44.500 33v16M37.500 42l7 7 7-7" fill="none" stroke="#86cbf5" strokeWidth="2.400" />
      </svg>
      <svg viewBox="0 0 68 88" className="mt-[7px] ml-[21px] h-[88px] w-[68px] shrink-0">
        <defs>
          <linearGradient id="bin"><stop offset="0" stopColor="#e9e9ec" /><stop offset=".3" stopColor="#d3d3d5" /><stop offset=".7" stopColor="#d6d5d6" /><stop offset="1" stopColor="#f0f0f3" /></linearGradient>
        </defs>
        <ellipse cx="34" cy="13" rx="33" ry="7.500" fill="#b9b3dc" />
        <path d="M5 8l7 3 4-6 6-2 3-3 8 4-1 5 4-1 5-8 9 6 2 2 7-1 4 7-5 6-12 1-10-1-14 1-12-3z" fill="#e9e9ea" />
        <path d="M8 9l5 7M20 3l8 5-6 1zM14 11l5-4M38 5l3-4 3 4M50 9l-6 9M56 8l4 7M62 8l-7 8" stroke="#77797e" strokeWidth="2" fill="none" />
        <path d="M17 12l12 2-5 5-6-2zM37 15l5-9 9 5-4 7h-9z" fill="#3d4250" />
        <path d="M23 9l8-1-3 5-5-1z" fill="#4bbbd3" /><path d="M31 12l3-2-1 8h-3z" fill="#c2763c" /><path d="M41 12l4-2 2 4-4 2z" fill="#8d4b37" />
        <path d="M1 13q4 7 33 7t33-7l-7 66q-1 8-10 8H18q-9 0-10-8z" fill="url(#bin)" />
        <path d="M22 28q20 6 32-4-12 16-32 4z" fill="#f3f3f4" />
        <path d="M9 76q25 8 50 0-1 10-9 11H18q-8-1-9-11z" fill="#f1f1f4" opacity=".7" />
      </svg>
    </div>
  );
}

export default function App() {
  return (
    <div className="flex h-[2338px] w-[3600px] flex-col overflow-hidden bg-[linear-gradient(to_right,#2a62c4_0_1800px,#9a9a9c_1800px)] font-['Inter',sans-serif]">
      <MenuBar />
      <div className="h-[2px] shrink-0 bg-[linear-gradient(to_right,#2259c0_0_131px,#0b0f2a_131px_220px,#25109a_220px_638px,#98421a_638px_1668px,#7c1790_1668px_1676px,#070818_1676px_2010px,#255a86_2010px_2408px,#070818_2408px_2480px,#0a1470_2480px_2990px,#04051c_2990px_3022px,#0f2a66_3022px)]" />
      <div className="flex h-[2122px] shrink-0 flex-col overflow-hidden rounded-[20px]">
        <TabStrip />
        <AddressRow />
        <Bookmarks />
        <div className="h-[2px] shrink-0 bg-[#c9cbcd]" />
        <Dashboard />
      </div>
      <div className="relative flex h-[128px] shrink-0 justify-center">
        <Wallpaper />
        <Dock />
      </div>
    </div>
  );
}
